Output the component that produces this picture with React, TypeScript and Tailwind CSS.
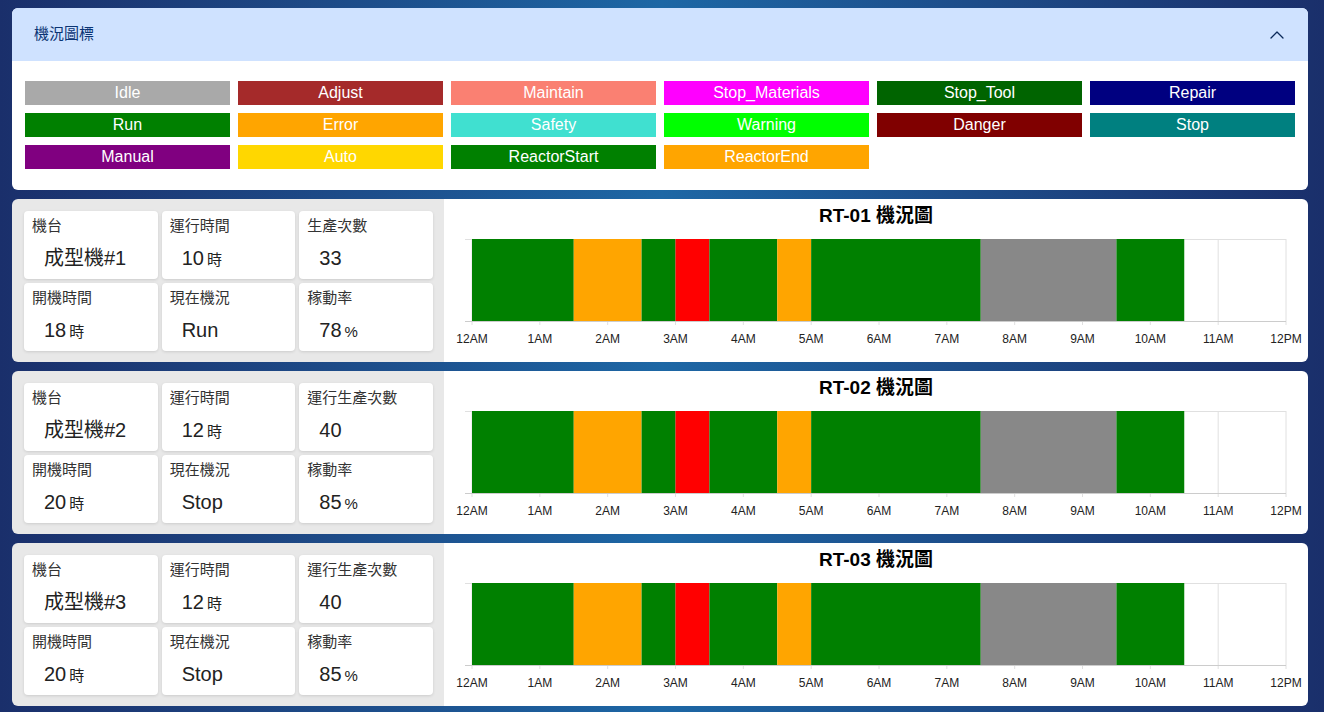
import { ChevronUp } from "lucide-react";

const legend = [
  { name: "Idle", color: "bg-[#a9a9a9]" },
  { name: "Adjust", color: "bg-[#a52a2a]" },
  { name: "Maintain", color: "bg-[#fa8072]" },
  { name: "Stop_Materials", color: "bg-[#ff00ff]" },
  { name: "Stop_Tool", color: "bg-[#006400]" },
  { name: "Repair", color: "bg-[#000080]" },
  { name: "Run", color: "bg-[#008000]" },
  { name: "Error", color: "bg-[#ffa500]" },
  { name: "Safety", color: "bg-[#40e0d0]" },
  { name: "Warning", color: "bg-[#00ff00]" },
  { name: "Danger", color: "bg-[#800000]" },
  { name: "Stop", color: "bg-[#008080]" },
  { name: "Manual", color: "bg-[#800080]" },
  { name: "Auto", color: "bg-[#ffd700]" },
  { name: "ReactorStart", color: "bg-[#008000]" },
  { name: "ReactorEnd", color: "bg-[#ffa500]" },
];

const segments = [
  { from: 0, to: 1.5, color: "#008000" },
  { from: 1.5, to: 2.5, color: "#ffa500" },
  { from: 2.5, to: 3, color: "#008000" },
  { from: 3, to: 3.5, color: "#ff0000" },
  { from: 3.5, to: 4.5, color: "#008000" },
  { from: 4.5, to: 5, color: "#ffa500" },
  { from: 5, to: 7.5, color: "#008000" },
  { from: 7.5, to: 9.5, color: "#888888" },
  { from: 9.5, to: 10.5, color: "#008000" },
];

const hours = ["12AM", "1AM", "2AM", "3AM", "4AM", "5AM", "6AM", "7AM", "8AM", "9AM", "10AM", "11AM", "12PM"];

const machines = [
  { id: "RT-01", name: "成型機#1", run: 10, countLabel: "生產次數", count: 33, on: 18, status: "Run", rate: 78 },
  { id: "RT-02", name: "成型機#2", run: 12, countLabel: "運行生產次數", count: 40, on: 20, status: "Stop", rate: 85 },
  { id: "RT-03", name: "成型機#3", run: 12, countLabel: "運行生產次數", count: 40, on: 20, status: "Stop", rate: 85 },
];

const X0 = 28;
const X1 = 842;
const TOP = 6;
const BOTTOM = 88;
const hx = (h: number) => X0 + ((X1 - X0) * h) / 12;

function StatCard({ label, value, unit }: { label: string; value: string | number; unit?: string }) {
  return (
    <div className="bg-white rounded-[4px] shadow-[0_1px_3px_rgba(0,0,0,0.12)] h-[68px] pl-2 pt-[5px]">
      <div className="text-[15px] leading-[20px] text-[#333]">{label}</div>
      <div className="mt-[10px] pl-3 text-[20px] leading-[24px] text-[#222]">
        {value}
        {unit && <span className="text-[15px] ml-[3px]">{unit}</span>}
      </div>
    </div>
  );
}

function Timeline() {
  return (
    <svg width="864" height="129" className="block">
      {hours.map((_, i) => (
        <line key={i} x1={hx(i)} y1={TOP} x2={hx(i)} y2={BOTTOM + 4} stroke="#e0e0e0" strokeWidth="1" />
      ))}
      <line x1={X0 - 7} y1={TOP + 0.5} x2={X1} y2={TOP + 0.5} stroke="#e0e0e0" />
      {segments.map((s, i) => (
        <rect key={i} x={hx(s.from)} y={TOP} width={hx(s.to) - hx(s.from)} height={BOTTOM - TOP} fill={s.color} />
      ))}
      <line x1={X0 - 7} y1={BOTTOM + 0.5} x2={X1} y2={BOTTOM + 0.5} stroke="#cccccc" />
      {hours.map((h, i) => (
        <text
          key={h}
          x={hx(i)}
          y={110}
          textAnchor="middle"
          fontSize="12"
          fill="#222"
          fontFamily="'Liberation Sans', Arial, sans-serif"
        >
          {h}
        </text>
      ))}
    </svg>
  );
}

export default function App() {
  return (
    <div
      className="min-h-[712px] pt-2 pl-3 pr-4 pb-[7px] bg-gradient-to-r from-[#1a2f6b] via-[#1d67a5] to-[#1a2f6b] flex flex-col gap-[9px]"
      style={{ fontFamily: "'Liberation Sans', 'Noto Sans CJK TC', sans-serif" }}
    >
      <div className="bg-white rounded-md overflow-hidden">
        <div className="h-[53px] bg-[#cfe2ff] flex items-center justify-between pl-[22px] pr-[19px]">
          <span className="text-[15px] text-[#0b3474]">機況圖標</span>
          <ChevronUp size={24} strokeWidth={1.3} className="text-[#0b2a5a]" />
        </div>
        <div className="grid grid-cols-6 gap-2 pl-[13px] pr-[13px] pt-5 pb-[21px]">
          {legend.map((l) => (
            <div key={l.name} className={`${l.color} h-6 leading-6 text-center text-white text-[16px]`}>
              {l.name}
            </div>
          ))}
        </div>
      </div>

      {machines.map((m) => (
        <div key={m.id} className="flex h-[163px] rounded-md overflow-hidden">
          <div className="w-[432px] bg-[#e8e8e8] pt-3 pl-3 pr-[11px] grid grid-cols-3 gap-1 content-start">
            <StatCard label="機台" value={m.name} />
            <StatCard label="運行時間" value={m.run} unit="時" />
            <StatCard label={m.countLabel} value={m.count} />
            <StatCard label="開機時間" value={m.on} unit="時" />
            <StatCard label="現在機況" value={m.status} />
            <StatCard label="稼動率" value={m.rate} unit="%" />
          </div>
          <div className="flex-1 bg-white flex flex-col">
            <div className="h-[34px] flex items-center justify-center text-[19px] font-bold text-black">
              {m.id} 機況圖
            </div>
            <Timeline />
          </div>
        </div>
      ))}
    </div>
  );
}
